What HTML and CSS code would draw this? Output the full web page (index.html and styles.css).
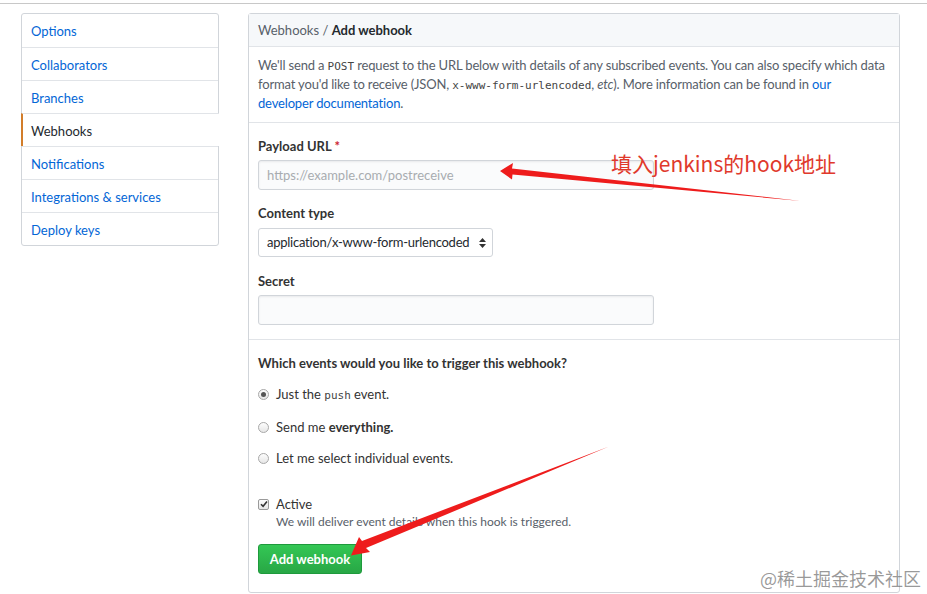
FILE: index.html
```html
<!DOCTYPE html>
<html>
<head>
<meta charset="utf-8">
<link rel="stylesheet" href="styles.css">
</head>
<body>
<div class="topline"></div>
<div class="page">
  <nav class="menu">
    <a class="menu-item">Options</a>
    <a class="menu-item">Collaborators</a>
    <a class="menu-item">Branches</a>
    <a class="menu-item selected">Webhooks</a>
    <a class="menu-item">Notifications</a>
    <a class="menu-item">Integrations &amp; services</a>
    <a class="menu-item">Deploy keys</a>
  </nav>
  <main class="panel">
    <div class="panel-head"><span class="crumb">Webhooks /</span> <strong>Add webhook</strong></div>
    <p class="desc">We'll send a <code>POST</code> request to the URL below with details of any subscribed events. You can also specify which data<br>format you'd like to receive (JSON, <code>x-www-form-urlencoded</code>, <em>etc</em>). More information can be found in <a class="link">our</a><br><a class="link">developer documentation</a>.</p>
    <div class="form">
      <label class="label first">Payload URL <span class="req">*</span></label>
      <div class="input wide placeholder">https://example.com/postreceive</div>
      <label class="label l2">Content type</label>
      <div class="input select"><span class="sel-text">application/x-www-form-urlencoded</span>
        <svg class="caret" width="7" height="10" viewBox="0 0 7 10"><path d="M3.5 0 L7 4 H0 Z M3.5 10 L7 6 H0 Z" fill="#333"/></svg>
      </div>
      <label class="label l3">Secret</label>
      <div class="input wide"></div>
    </div>
    <div class="events">
      <div class="label q">Which events would you like to trigger this webhook?</div>
      <div class="opt o1"><span class="radio on"></span><span>Just the <code>push</code> event.</span></div>
      <div class="opt o2"><span class="radio"></span><span>Send me <b class="semi">everything.</b></span></div>
      <div class="opt o3"><span class="radio"></span><span>Let me select individual events.</span></div>
      <div class="active"><span class="check"><svg width="8" height="8" viewBox="0 0 8 8"><path d="M1 4.2 L3.1 6.3 L7 1.6" stroke="#333" stroke-width="1.6" fill="none"/></svg></span><span>Active</span></div>
      <div class="note">We will deliver event details when this hook is triggered.</div>
      <button class="btn">Add webhook</button>
    </div>
  </main>
</div>
<div class="annot-text">填入jenkins的hook地址</div>
<svg class="arrows" width="927" height="594" viewBox="0 0 927 594">
  <path d="M801 201 L512 168.5 L513 163 L500 171 L512 179.5 L512.5 174.5 Z" fill="#ee1c1c"/>
  <path d="M609 446.5 L362 541 L359 537 L351 555.5 L370 552 L366 548 Z" fill="#ee1c1c"/>
</svg>
<div class="watermark">@稀土掘金技术社区</div>
</body>
</html>
```
FILE: styles.css
```css
html, body {
  margin: 0;
  padding: 0;
  background: #fff;
}
body {
  width: 927px;
  height: 594px;
  position: relative;
  overflow: hidden;
  font-family: "Lato", "Noto Sans", sans-serif;
  font-size: 13px;
  color: #24292e;
}
.topline {
  margin-top: 3px;
  height: 1px;
  background: #c8c8c8;
}
.page {
  display: flex;
  align-items: flex-start;
  gap: 29px;
  padding: 9px 0 0 21px;
}
.menu {
  width: 196px;
  border: 1px solid #d1d5da;
  border-radius: 3px;
  display: flex;
  flex-direction: column;
  background: #fff;
}
.menu-item {
  display: block;
  height: 33px;
  line-height: 34px;
  padding-left: 9px;
  color: #0366d6;
  border-top: 1px solid #e1e4e8;
  box-sizing: border-box;
}
.menu-item:first-child {
  border-top: none;
}
.menu-item.selected {
  color: #24292e;
  border-left: 2px solid #d27d2a;
  padding-left: 8px;
  margin-left: -1px;
  margin-right: -1px;
  background: #fff;
}
.panel {
  width: 652px;
  height: 580px;
  border: 1px solid #d1d5da;
  border-radius: 3px;
  box-sizing: border-box;
}
.panel-head {
  height: 33px;
  line-height: 32px;
  padding-left: 9px;
  background: #f6f8fa;
  border-bottom: 1px solid #e1e4e8;
  box-sizing: border-box;
}
.crumb {
  color: #586069;
}
.panel-head strong {
  font-weight: 700;
}
.desc {
  margin: 0;
  padding: 9px 9px 9px 9px;
  line-height: 19px;
  color: #586069;
  letter-spacing: -0.16px;
  white-space: nowrap;
  border-bottom: 1px solid #e1e4e8;
}
code {
  font-family: "DejaVu Sans Mono", "Liberation Mono", monospace;
  font-size: 11px;
  line-height: 1;
  letter-spacing: 0;
  color: #444;
}
.link {
  color: #0366d6;
}
.form {
  padding: 14px 9px 14px;
  border-bottom: 1px solid #e1e4e8;
  display: flex;
  flex-direction: column;
  align-items: flex-start;
}
.label {
  display: block;
  font-weight: 700;
  color: #333;
  line-height: 18px;
  margin: 0 0 5px;
}
.label.l2 {
  margin-top: 14px;
  margin-bottom: 6px;
}
.label.l3 {
  margin-top: 15px;
}
.req {
  color: #cb2431;
}
.input {
  box-sizing: border-box;
  border: 1px solid #d1d5da;
  border-radius: 3px;
  background: #fafbfc;
  height: 30px;
  line-height: 28px;
  padding: 0 8px;
  box-shadow: inset 0 1px 2px rgba(27,31,35,0.075);
}
.wide {
  width: 396px;
}
.placeholder {
  color: #a8acb0;
}
.select {
  width: 235px;
  height: 29px;
  line-height: 27px;
  background: #fff;
  box-shadow: none;
  color: #24292e;
  display: flex;
  align-items: center;
  justify-content: space-between;
  padding-right: 6px;
}
.sel-text {
  letter-spacing: -0.25px;
}
.caret {
  flex: none;
}
.events {
  padding: 14px 9px 0;
}
.q {
  margin: 0 0 13px;
}
.opt {
  display: flex;
  align-items: center;
  height: 18px;
  line-height: 18px;
  color: #333;
}
.o1 { margin-bottom: 15px; }
.o2 { margin-bottom: 13px; }
.semi {
  font-weight: 700;
}
.radio {
  width: 9px;
  height: 9px;
  border: 1px solid #a8a8a8;
  border-radius: 50%;
  background: linear-gradient(#fdfdfd, #e6e6e6);
  margin: 0 7px 0 0;
  position: relative;
  flex: none;
}
.radio.on::after {
  content: "";
  position: absolute;
  left: 2px;
  top: 2px;
  width: 5px;
  height: 5px;
  border-radius: 50%;
  background: #555;
}
.active {
  display: flex;
  align-items: center;
  margin-top: 28px;
  height: 18px;
  line-height: 18px;
  color: #333;
}
.check {
  width: 9px;
  height: 9px;
  border: 1px solid #9a9a9a;
  border-radius: 2px;
  background: linear-gradient(#fdfdfd, #e6e6e6);
  margin: 0 7px 0 0;
  display: flex;
  align-items: center;
  justify-content: center;
  flex: none;
}
.note {
  padding-left: 18px;
  color: #586069;
  font-size: 12px;
  line-height: 18px;
}
.btn {
  display: block;
  margin-top: 13px;
  height: 30px;
  width: 104px;
  border: 1px solid #1e9a3c;
  border-radius: 3px;
  background: linear-gradient(#34c755, #28a745);
  color: #fff;
  font-family: inherit;
  font-size: 13px;
  font-weight: 700;
  padding: 0;
}
.annot-text {
  position: absolute;
  left: 611px;
  top: 149px;
  font-family: "Noto Sans CJK SC", sans-serif;
  font-size: 21px;
  line-height: 28px;
  color: #e0392c;
  letter-spacing: 0;
}
.arrows {
  position: absolute;
  left: 0;
  top: 0;
  pointer-events: none;
}
.watermark {
  position: absolute;
  left: 760px;
  top: 566px;
  font-family: "Noto Sans CJK SC", sans-serif;
  font-size: 18px;
  line-height: 24px;
  color: rgba(120,120,120,0.75);
}
```
